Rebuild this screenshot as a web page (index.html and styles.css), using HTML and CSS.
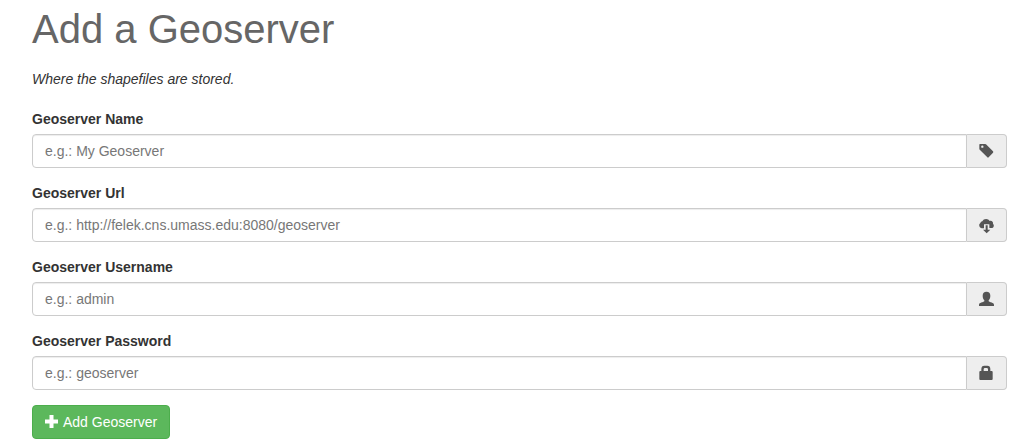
FILE: index.html
```html
<!DOCTYPE html>
<html lang="en">
<head>
<meta charset="utf-8">
<title>Add a Geoserver</title>
<link rel="stylesheet" href="styles.css">
</head>
<body>
<main class="page">
  <h1 class="title">Add a Geoserver</h1>
  <p class="intro"><em>Where the shapefiles are stored.</em></p>
  <form class="form">
    <div class="group">
      <label class="label" for="name">Geoserver Name</label>
      <div class="field">
        <input class="input" id="name" type="text" placeholder="e.g.: My Geoserver">
        <span class="addon"><svg class="icon" viewBox="0 0 45 45" aria-hidden="true"><path fill-rule="evenodd" d="M3 3H18Q20 3 21 4L42 25Q44 27 42 29L29 43Q27 45 25 43L3 21Q1 19 1 17V5Q1 3 3 3ZM10 7.500A3.500 3.500 0 1 0 10 14.500A3.500 3.500 0 1 0 10 7.500Z"/></svg></span>
      </div>
    </div>
    <div class="group">
      <label class="label" for="url">Geoserver Url</label>
      <div class="field">
        <input class="input" id="url" type="text" placeholder="e.g.: http://felek.cns.umass.edu:8080/geoserver">
        <span class="addon"><svg class="icon" viewBox="0 0 45 45" aria-hidden="true"><path d="M8 34A9 9 0 0 1 4 18A7 7 0 0 1 10 13C13 4 28 3 32 12C39 10 43 16 42 20C47 25 44 33 37 33H31V22H15V34Z"/><path d="M20 25H26V38H34L23 49L12 38H20Z"/></svg></span>
      </div>
    </div>
    <div class="group">
      <label class="label" for="username">Geoserver Username</label>
      <div class="field">
        <input class="input" id="username" type="text" placeholder="e.g.: admin">
        <span class="addon"><svg class="icon" viewBox="0 0 45 45" aria-hidden="true"><path d="M22.500 2C30 2 34 6 34 14C34 20 32 25 29 28V31C32 34 45 35 45 41V45H0V41C0 35 13 34 16 31V28C13 25 11 20 11 14C11 6 15 2 22.500 2Z"/></svg></span>
      </div>
    </div>
    <div class="group">
      <label class="label" for="password">Geoserver Password</label>
      <div class="field">
        <input class="input" id="password" type="password" placeholder="e.g.: geoserver">
        <span class="addon"><svg class="icon" viewBox="0 0 45 45" aria-hidden="true"><path fill-rule="evenodd" d="M7 18V12Q7 2 16 2H25Q34 2 34 12V18H38Q41 18 41 21V42Q41 45 38 45H4Q1 45 1 42V21Q1 18 4 18ZM14 18H27V13Q27 9 23 9H18Q14 9 14 13Z"/></svg></span>
      </div>
    </div>
    <button class="submit" type="submit"><svg class="plus" viewBox="0 0 14 14" aria-hidden="true"><path d="M4.500 0H8.500V4.500H13V8.500H8.500V13H4.500V8.500H0V4.500H4.500Z"/></svg>Add Geoserver</button>
  </form>
</main>
</body>
</html>
```
FILE: styles.css
```css
* {
  box-sizing: border-box;
}

body {
  margin: 0;
  background: #fff;
  color: #333;
  font: 14px/20px "Liberation Sans", Arial, sans-serif;
}

.page {
  padding: 7px 13px 5px 32px;
}

.title {
  margin: 0 0 18px;
  color: #666;
  font-size: 40px;
  font-weight: 400;
  line-height: 44px;
}

.intro {
  margin: 0 0 20px;
}

.group {
  margin-bottom: 15px;
}

.label {
  display: block;
  margin-bottom: 5px;
  font-weight: 700;
}

.field {
  display: flex;
  height: 34px;
}

.input {
  flex: 1;
  min-width: 0;
  padding: 6px 12px;
  border: 1px solid #ccc;
  border-radius: 4px 0 0 4px;
  background: #fff;
  box-shadow: inset 0 1px 1px rgba(0, 0, 0, 0.075);
  color: #555;
  font: inherit;
}

.input::placeholder {
  color: #777;
  opacity: 1;
}

.addon {
  display: flex;
  align-items: center;
  padding: 0 12px 1px;
  border: 1px solid #ccc;
  border-left: 0;
  border-radius: 0 4px 4px 0;
  background: #eee;
}

.icon {
  width: 15px;
  height: 15px;
  overflow: visible;
  fill: #555;
}

.submit {
  display: inline-flex;
  align-items: center;
  gap: 4px;
  height: 34px;
  padding: 0 12px;
  border: 1px solid #4cae4c;
  border-radius: 4px;
  background: #5cb85c;
  color: #fff;
  font: inherit;
  cursor: pointer;
}

.plus {
  width: 14px;
  height: 14px;
  fill: #fff;
}
```
